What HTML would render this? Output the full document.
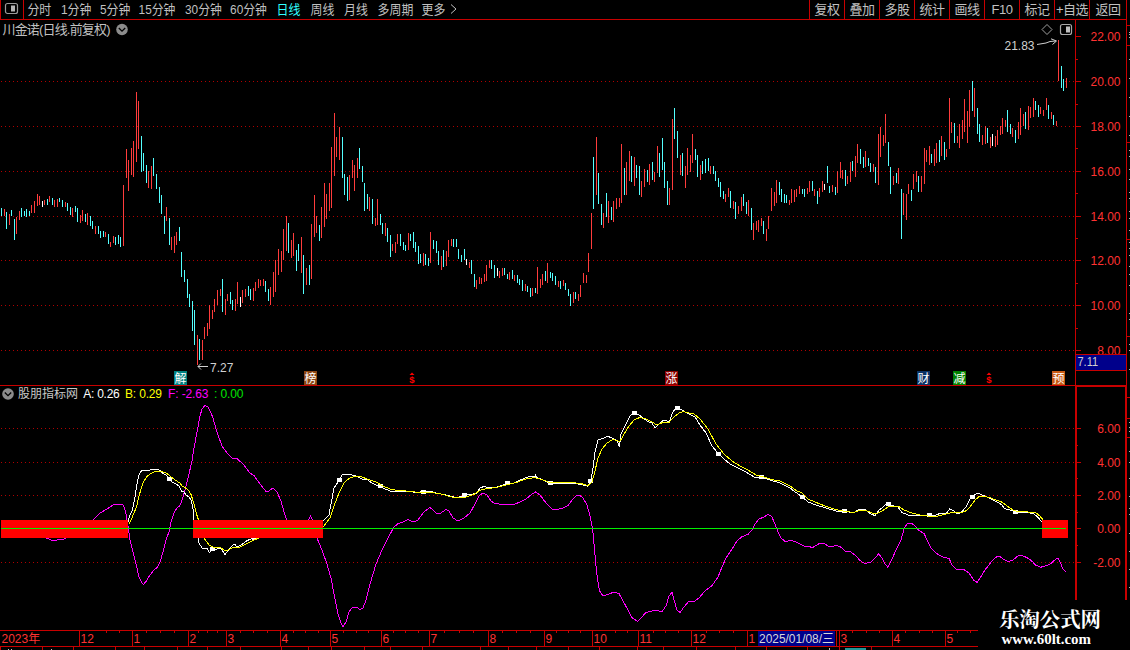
<!DOCTYPE html>
<html lang="zh-CN"><head><meta charset="utf-8"><title>川金诺 日线 股朋指标网</title>
<style>
html,body{margin:0;padding:0;background:#000;}
body{width:1130px;height:650px;overflow:hidden;position:relative;font-family:"Liberation Sans","Noto Sans CJK SC",sans-serif;}
svg{position:absolute;left:0;top:0;display:block;}
text{font-family:"Liberation Sans","Noto Sans CJK SC",sans-serif;}
.tb{font-size:13px;fill:#c0c0c0;letter-spacing:-0.55px;}
.ax{font-size:12px;fill:#ff3232;}
.wm{font-family:"Liberation Serif","Noto Serif CJK SC",serif;font-weight:bold;fill:#fff;}
.mk{font-size:12px;fill:#fff;}
</style></head><body>
<svg width="1130" height="650" viewBox="0 0 1130 650">
<rect x="0" y="0" width="1130" height="650" fill="#000"/>
<line x1="1" y1="81.5" x2="1075" y2="81.5" stroke="#b00000" stroke-width="1" stroke-dasharray="1 3" shape-rendering="crispEdges"/>
<line x1="1" y1="126.5" x2="1075" y2="126.5" stroke="#b00000" stroke-width="1" stroke-dasharray="1 3" shape-rendering="crispEdges"/>
<line x1="1" y1="171.5" x2="1075" y2="171.5" stroke="#b00000" stroke-width="1" stroke-dasharray="1 3" shape-rendering="crispEdges"/>
<line x1="1" y1="216.5" x2="1075" y2="216.5" stroke="#b00000" stroke-width="1" stroke-dasharray="1 3" shape-rendering="crispEdges"/>
<line x1="1" y1="260.5" x2="1075" y2="260.5" stroke="#b00000" stroke-width="1" stroke-dasharray="1 3" shape-rendering="crispEdges"/>
<line x1="1" y1="305.5" x2="1075" y2="305.5" stroke="#b00000" stroke-width="1" stroke-dasharray="1 3" shape-rendering="crispEdges"/>
<line x1="1" y1="350.5" x2="1075" y2="350.5" stroke="#b00000" stroke-width="1" stroke-dasharray="1 3" shape-rendering="crispEdges"/>
<line x1="1" y1="428.5" x2="1075" y2="428.5" stroke="#b00000" stroke-width="1" stroke-dasharray="1 3" shape-rendering="crispEdges"/>
<line x1="1" y1="462.5" x2="1075" y2="462.5" stroke="#b00000" stroke-width="1" stroke-dasharray="1 3" shape-rendering="crispEdges"/>
<line x1="1" y1="495.5" x2="1075" y2="495.5" stroke="#b00000" stroke-width="1" stroke-dasharray="1 3" shape-rendering="crispEdges"/>
<line x1="1" y1="562.5" x2="1075" y2="562.5" stroke="#b00000" stroke-width="1" stroke-dasharray="1 3" shape-rendering="crispEdges"/>
<rect x="1" y="208" width="1" height="8" fill="#54ffff"/>
<rect x="4" y="209" width="1" height="7" fill="#ff3c3c"/>
<rect x="6" y="212" width="1" height="17" fill="#54ffff"/>
<rect x="9" y="214" width="1" height="11" fill="#ff3c3c"/>
<rect x="11" y="210" width="1" height="6" fill="#54ffff"/>
<rect x="14" y="219" width="1" height="21" fill="#54ffff"/>
<rect x="16" y="217" width="1" height="17" fill="#ff3c3c"/>
<rect x="19" y="211" width="1" height="9" fill="#ff3c3c"/>
<rect x="21" y="208" width="1" height="9" fill="#54ffff"/>
<rect x="24" y="211" width="1" height="5" fill="#54ffff"/>
<rect x="26" y="209" width="1" height="8" fill="#54ffff"/>
<rect x="29" y="211" width="1" height="5" fill="#54ffff"/>
<rect x="31" y="205" width="1" height="8" fill="#ff3c3c"/>
<rect x="34" y="201" width="1" height="12" fill="#ff3c3c"/>
<rect x="37" y="194" width="1" height="12" fill="#ff3c3c"/>
<rect x="39" y="196" width="1" height="9" fill="#ff3c3c"/>
<rect x="42" y="201" width="1" height="6" fill="#ffffff"/>
<rect x="44" y="200" width="1" height="5" fill="#ff3c3c"/>
<rect x="47" y="199" width="1" height="6" fill="#54ffff"/>
<rect x="49" y="196" width="1" height="6" fill="#ff3c3c"/>
<rect x="52" y="198" width="1" height="7" fill="#54ffff"/>
<rect x="54" y="200" width="1" height="7" fill="#ff3c3c"/>
<rect x="57" y="199" width="1" height="8" fill="#ff3c3c"/>
<rect x="59" y="198" width="1" height="4" fill="#54ffff"/>
<rect x="62" y="200" width="1" height="7" fill="#54ffff"/>
<rect x="65" y="202" width="1" height="5" fill="#ff3c3c"/>
<rect x="67" y="203" width="1" height="8" fill="#54ffff"/>
<rect x="70" y="207" width="1" height="8" fill="#54ffff"/>
<rect x="72" y="208" width="1" height="9" fill="#ff3c3c"/>
<rect x="75" y="206" width="1" height="6" fill="#54ffff"/>
<rect x="77" y="208" width="1" height="14" fill="#54ffff"/>
<rect x="80" y="215" width="1" height="8" fill="#ff3c3c"/>
<rect x="82" y="210" width="1" height="11" fill="#ff3c3c"/>
<rect x="85" y="214" width="1" height="8" fill="#54ffff"/>
<rect x="87" y="213" width="1" height="12" fill="#ff3c3c"/>
<rect x="90" y="216" width="1" height="10" fill="#54ffff"/>
<rect x="92" y="221" width="1" height="8" fill="#54ffff"/>
<rect x="95" y="226" width="1" height="8" fill="#ff3c3c"/>
<rect x="98" y="226" width="1" height="8" fill="#54ffff"/>
<rect x="100" y="231" width="1" height="7" fill="#54ffff"/>
<rect x="103" y="231" width="1" height="6" fill="#54ffff"/>
<rect x="105" y="232" width="1" height="5" fill="#ff3c3c"/>
<rect x="108" y="234" width="1" height="10" fill="#54ffff"/>
<rect x="110" y="242" width="1" height="5" fill="#ff3c3c"/>
<rect x="113" y="236" width="1" height="7" fill="#ff3c3c"/>
<rect x="115" y="237" width="1" height="8" fill="#54ffff"/>
<rect x="118" y="235" width="1" height="9" fill="#54ffff"/>
<rect x="120" y="237" width="1" height="10" fill="#54ffff"/>
<rect x="123" y="185" width="1" height="61" fill="#ff3c3c"/>
<rect x="126" y="149" width="1" height="29" fill="#ff3c3c"/>
<rect x="128" y="160" width="1" height="31" fill="#ff3c3c"/>
<rect x="131" y="148" width="1" height="27" fill="#ff3c3c"/>
<rect x="133" y="141" width="1" height="36" fill="#ff3c3c"/>
<rect x="136" y="92" width="1" height="70" fill="#ff3c3c"/>
<rect x="138" y="101" width="1" height="48" fill="#ff3c3c"/>
<rect x="141" y="136" width="1" height="36" fill="#54ffff"/>
<rect x="143" y="153" width="1" height="18" fill="#54ffff"/>
<rect x="146" y="165" width="1" height="18" fill="#54ffff"/>
<rect x="148" y="171" width="1" height="17" fill="#ff3c3c"/>
<rect x="151" y="166" width="1" height="23" fill="#ff3c3c"/>
<rect x="153" y="158" width="1" height="18" fill="#54ffff"/>
<rect x="156" y="174" width="1" height="15" fill="#54ffff"/>
<rect x="159" y="187" width="1" height="16" fill="#54ffff"/>
<rect x="161" y="195" width="1" height="19" fill="#54ffff"/>
<rect x="164" y="216" width="1" height="18" fill="#54ffff"/>
<rect x="166" y="207" width="1" height="14" fill="#ff3c3c"/>
<rect x="169" y="218" width="1" height="27" fill="#54ffff"/>
<rect x="171" y="237" width="1" height="13" fill="#ff3c3c"/>
<rect x="174" y="236" width="1" height="17" fill="#ff3c3c"/>
<rect x="176" y="232" width="1" height="13" fill="#ff3c3c"/>
<rect x="179" y="227" width="1" height="14" fill="#54ffff"/>
<rect x="181" y="252" width="1" height="25" fill="#54ffff"/>
<rect x="184" y="270" width="1" height="12" fill="#54ffff"/>
<rect x="187" y="279" width="1" height="19" fill="#54ffff"/>
<rect x="189" y="294" width="1" height="13" fill="#54ffff"/>
<rect x="192" y="301" width="1" height="30" fill="#54ffff"/>
<rect x="194" y="310" width="1" height="35" fill="#54ffff"/>
<rect x="197" y="335" width="1" height="30" fill="#ff3c3c"/>
<rect x="199" y="339" width="1" height="21" fill="#54ffff"/>
<rect x="202" y="340" width="1" height="20" fill="#ff3c3c"/>
<rect x="204" y="327" width="1" height="12" fill="#ff3c3c"/>
<rect x="207" y="323" width="1" height="13" fill="#ff3c3c"/>
<rect x="209" y="305" width="1" height="24" fill="#ff3c3c"/>
<rect x="212" y="310" width="1" height="9" fill="#ff3c3c"/>
<rect x="214" y="299" width="1" height="13" fill="#ff3c3c"/>
<rect x="217" y="290" width="1" height="15" fill="#ff3c3c"/>
<rect x="220" y="289" width="1" height="7" fill="#ff3c3c"/>
<rect x="222" y="279" width="1" height="33" fill="#54ffff"/>
<rect x="225" y="299" width="1" height="16" fill="#ff3c3c"/>
<rect x="227" y="294" width="1" height="7" fill="#ff3c3c"/>
<rect x="230" y="292" width="1" height="12" fill="#54ffff"/>
<rect x="232" y="300" width="1" height="10" fill="#54ffff"/>
<rect x="235" y="299" width="1" height="12" fill="#ff3c3c"/>
<rect x="237" y="282" width="1" height="22" fill="#ff3c3c"/>
<rect x="240" y="297" width="1" height="10" fill="#ffffff"/>
<rect x="242" y="290" width="1" height="13" fill="#ff3c3c"/>
<rect x="245" y="289" width="1" height="8" fill="#ff3c3c"/>
<rect x="248" y="286" width="1" height="10" fill="#54ffff"/>
<rect x="250" y="289" width="1" height="11" fill="#54ffff"/>
<rect x="253" y="288" width="1" height="13" fill="#ff3c3c"/>
<rect x="255" y="282" width="1" height="9" fill="#ff3c3c"/>
<rect x="258" y="279" width="1" height="9" fill="#ff3c3c"/>
<rect x="260" y="280" width="1" height="6" fill="#ff3c3c"/>
<rect x="263" y="279" width="1" height="7" fill="#ff3c3c"/>
<rect x="265" y="281" width="1" height="11" fill="#54ffff"/>
<rect x="268" y="289" width="1" height="12" fill="#54ffff"/>
<rect x="270" y="287" width="1" height="18" fill="#ff3c3c"/>
<rect x="273" y="272" width="1" height="25" fill="#ff3c3c"/>
<rect x="275" y="260" width="1" height="32" fill="#ff3c3c"/>
<rect x="278" y="249" width="1" height="26" fill="#ff3c3c"/>
<rect x="281" y="251" width="1" height="21" fill="#ff3c3c"/>
<rect x="283" y="229" width="1" height="31" fill="#ff3c3c"/>
<rect x="286" y="216" width="1" height="35" fill="#ff3c3c"/>
<rect x="288" y="223" width="1" height="30" fill="#54ffff"/>
<rect x="291" y="240" width="1" height="18" fill="#ff3c3c"/>
<rect x="293" y="233" width="1" height="23" fill="#ff3c3c"/>
<rect x="296" y="250" width="1" height="21" fill="#54ffff"/>
<rect x="298" y="244" width="1" height="17" fill="#54ffff"/>
<rect x="301" y="237" width="1" height="36" fill="#ff3c3c"/>
<rect x="303" y="255" width="1" height="39" fill="#54ffff"/>
<rect x="306" y="268" width="1" height="17" fill="#ff3c3c"/>
<rect x="309" y="265" width="1" height="20" fill="#54ffff"/>
<rect x="311" y="224" width="1" height="55" fill="#ff3c3c"/>
<rect x="314" y="195" width="1" height="42" fill="#ff3c3c"/>
<rect x="316" y="216" width="1" height="17" fill="#ff3c3c"/>
<rect x="319" y="225" width="1" height="16" fill="#54ffff"/>
<rect x="321" y="207" width="1" height="31" fill="#ff3c3c"/>
<rect x="324" y="183" width="1" height="44" fill="#ff3c3c"/>
<rect x="326" y="194" width="1" height="25" fill="#ff3c3c"/>
<rect x="329" y="183" width="1" height="28" fill="#ff3c3c"/>
<rect x="331" y="147" width="1" height="61" fill="#ff3c3c"/>
<rect x="334" y="113" width="1" height="63" fill="#ff3c3c"/>
<rect x="336" y="137" width="1" height="20" fill="#ff3c3c"/>
<rect x="339" y="127" width="1" height="33" fill="#ff3c3c"/>
<rect x="342" y="137" width="1" height="41" fill="#54ffff"/>
<rect x="344" y="174" width="1" height="21" fill="#54ffff"/>
<rect x="347" y="177" width="1" height="24" fill="#54ffff"/>
<rect x="349" y="175" width="1" height="25" fill="#ff3c3c"/>
<rect x="352" y="160" width="1" height="18" fill="#ff3c3c"/>
<rect x="354" y="165" width="1" height="26" fill="#ff3c3c"/>
<rect x="357" y="158" width="1" height="20" fill="#ff3c3c"/>
<rect x="359" y="148" width="1" height="21" fill="#54ffff"/>
<rect x="362" y="166" width="1" height="16" fill="#54ffff"/>
<rect x="364" y="183" width="1" height="28" fill="#54ffff"/>
<rect x="367" y="194" width="1" height="15" fill="#54ffff"/>
<rect x="369" y="197" width="1" height="14" fill="#ff3c3c"/>
<rect x="372" y="199" width="1" height="25" fill="#54ffff"/>
<rect x="375" y="218" width="1" height="8" fill="#ff3c3c"/>
<rect x="377" y="199" width="1" height="26" fill="#ff3c3c"/>
<rect x="380" y="214" width="1" height="11" fill="#54ffff"/>
<rect x="382" y="223" width="1" height="11" fill="#54ffff"/>
<rect x="385" y="223" width="1" height="13" fill="#ff3c3c"/>
<rect x="387" y="228" width="1" height="14" fill="#54ffff"/>
<rect x="390" y="235" width="1" height="22" fill="#54ffff"/>
<rect x="392" y="244" width="1" height="7" fill="#ff3c3c"/>
<rect x="395" y="242" width="1" height="11" fill="#ff3c3c"/>
<rect x="397" y="234" width="1" height="10" fill="#ff3c3c"/>
<rect x="400" y="234" width="1" height="12" fill="#54ffff"/>
<rect x="403" y="242" width="1" height="8" fill="#54ffff"/>
<rect x="405" y="245" width="1" height="6" fill="#54ffff"/>
<rect x="408" y="233" width="1" height="17" fill="#ff3c3c"/>
<rect x="410" y="234" width="1" height="7" fill="#54ffff"/>
<rect x="413" y="232" width="1" height="16" fill="#54ffff"/>
<rect x="415" y="242" width="1" height="10" fill="#54ffff"/>
<rect x="418" y="246" width="1" height="18" fill="#54ffff"/>
<rect x="420" y="254" width="1" height="9" fill="#54ffff"/>
<rect x="423" y="253" width="1" height="13" fill="#ff3c3c"/>
<rect x="425" y="254" width="1" height="11" fill="#54ffff"/>
<rect x="428" y="258" width="1" height="8" fill="#54ffff"/>
<rect x="430" y="232" width="1" height="31" fill="#ff3c3c"/>
<rect x="433" y="240" width="1" height="9" fill="#54ffff"/>
<rect x="436" y="241" width="1" height="12" fill="#54ffff"/>
<rect x="438" y="251" width="1" height="14" fill="#54ffff"/>
<rect x="441" y="256" width="1" height="14" fill="#ff3c3c"/>
<rect x="443" y="250" width="1" height="17" fill="#54ffff"/>
<rect x="446" y="251" width="1" height="15" fill="#ff3c3c"/>
<rect x="448" y="240" width="1" height="17" fill="#ff3c3c"/>
<rect x="451" y="239" width="1" height="7" fill="#ff3c3c"/>
<rect x="453" y="239" width="1" height="8" fill="#54ffff"/>
<rect x="456" y="239" width="1" height="8" fill="#54ffff"/>
<rect x="458" y="249" width="1" height="10" fill="#54ffff"/>
<rect x="461" y="255" width="1" height="7" fill="#54ffff"/>
<rect x="464" y="249" width="1" height="11" fill="#54ffff"/>
<rect x="466" y="259" width="1" height="6" fill="#ffffff"/>
<rect x="469" y="262" width="1" height="6" fill="#ff3c3c"/>
<rect x="471" y="260" width="1" height="14" fill="#54ffff"/>
<rect x="474" y="274" width="1" height="13" fill="#54ffff"/>
<rect x="476" y="280" width="1" height="9" fill="#ff3c3c"/>
<rect x="479" y="277" width="1" height="7" fill="#ff3c3c"/>
<rect x="481" y="278" width="1" height="6" fill="#ff3c3c"/>
<rect x="484" y="274" width="1" height="8" fill="#ff3c3c"/>
<rect x="486" y="265" width="1" height="16" fill="#ff3c3c"/>
<rect x="489" y="260" width="1" height="8" fill="#ff3c3c"/>
<rect x="491" y="260" width="1" height="9" fill="#54ffff"/>
<rect x="494" y="265" width="1" height="13" fill="#54ffff"/>
<rect x="497" y="268" width="1" height="8" fill="#ffffff"/>
<rect x="499" y="271" width="1" height="7" fill="#ff3c3c"/>
<rect x="502" y="268" width="1" height="8" fill="#ff3c3c"/>
<rect x="504" y="268" width="1" height="7" fill="#54ffff"/>
<rect x="507" y="274" width="1" height="5" fill="#54ffff"/>
<rect x="509" y="272" width="1" height="8" fill="#ff3c3c"/>
<rect x="512" y="270" width="1" height="9" fill="#54ffff"/>
<rect x="514" y="275" width="1" height="6" fill="#ff3c3c"/>
<rect x="517" y="275" width="1" height="8" fill="#54ffff"/>
<rect x="519" y="279" width="1" height="6" fill="#54ffff"/>
<rect x="522" y="280" width="1" height="11" fill="#54ffff"/>
<rect x="525" y="284" width="1" height="7" fill="#ff3c3c"/>
<rect x="527" y="286" width="1" height="6" fill="#54ffff"/>
<rect x="530" y="288" width="1" height="9" fill="#54ffff"/>
<rect x="532" y="288" width="1" height="8" fill="#ff3c3c"/>
<rect x="535" y="288" width="1" height="5" fill="#54ffff"/>
<rect x="537" y="267" width="1" height="27" fill="#ff3c3c"/>
<rect x="540" y="279" width="1" height="9" fill="#ff3c3c"/>
<rect x="542" y="274" width="1" height="11" fill="#ff3c3c"/>
<rect x="545" y="271" width="1" height="10" fill="#54ffff"/>
<rect x="547" y="263" width="1" height="20" fill="#ff3c3c"/>
<rect x="550" y="272" width="1" height="6" fill="#54ffff"/>
<rect x="552" y="273" width="1" height="8" fill="#54ffff"/>
<rect x="555" y="276" width="1" height="9" fill="#54ffff"/>
<rect x="558" y="281" width="1" height="6" fill="#ff3c3c"/>
<rect x="560" y="281" width="1" height="8" fill="#54ffff"/>
<rect x="563" y="280" width="1" height="6" fill="#ff3c3c"/>
<rect x="565" y="283" width="1" height="7" fill="#54ffff"/>
<rect x="568" y="289" width="1" height="7" fill="#54ffff"/>
<rect x="570" y="294" width="1" height="12" fill="#54ffff"/>
<rect x="573" y="292" width="1" height="11" fill="#ff3c3c"/>
<rect x="575" y="292" width="1" height="7" fill="#54ffff"/>
<rect x="578" y="294" width="1" height="7" fill="#ff3c3c"/>
<rect x="580" y="285" width="1" height="12" fill="#ff3c3c"/>
<rect x="583" y="273" width="1" height="10" fill="#ff3c3c"/>
<rect x="586" y="275" width="1" height="8" fill="#ff3c3c"/>
<rect x="588" y="253" width="1" height="19" fill="#ff3c3c"/>
<rect x="591" y="213" width="1" height="36" fill="#ff3c3c"/>
<rect x="593" y="157" width="1" height="52" fill="#54ffff"/>
<rect x="596" y="137" width="1" height="58" fill="#ff3c3c"/>
<rect x="598" y="173" width="1" height="31" fill="#54ffff"/>
<rect x="601" y="204" width="1" height="21" fill="#54ffff"/>
<rect x="603" y="213" width="1" height="15" fill="#ff3c3c"/>
<rect x="606" y="193" width="1" height="24" fill="#54ffff"/>
<rect x="608" y="201" width="1" height="22" fill="#ff3c3c"/>
<rect x="611" y="207" width="1" height="13" fill="#54ffff"/>
<rect x="613" y="201" width="1" height="21" fill="#ff3c3c"/>
<rect x="616" y="198" width="1" height="11" fill="#ff3c3c"/>
<rect x="619" y="198" width="1" height="9" fill="#ff3c3c"/>
<rect x="621" y="144" width="1" height="59" fill="#ff3c3c"/>
<rect x="624" y="168" width="1" height="27" fill="#54ffff"/>
<rect x="626" y="162" width="1" height="33" fill="#ff3c3c"/>
<rect x="629" y="151" width="1" height="30" fill="#ff3c3c"/>
<rect x="631" y="156" width="1" height="26" fill="#54ffff"/>
<rect x="634" y="157" width="1" height="29" fill="#ff3c3c"/>
<rect x="636" y="165" width="1" height="13" fill="#54ffff"/>
<rect x="639" y="166" width="1" height="29" fill="#54ffff"/>
<rect x="641" y="181" width="1" height="16" fill="#ff3c3c"/>
<rect x="644" y="169" width="1" height="18" fill="#ff3c3c"/>
<rect x="647" y="170" width="1" height="12" fill="#54ffff"/>
<rect x="649" y="164" width="1" height="21" fill="#ff3c3c"/>
<rect x="652" y="162" width="1" height="18" fill="#54ffff"/>
<rect x="654" y="172" width="1" height="10" fill="#ff3c3c"/>
<rect x="657" y="146" width="1" height="27" fill="#ff3c3c"/>
<rect x="659" y="153" width="1" height="24" fill="#54ffff"/>
<rect x="662" y="138" width="1" height="32" fill="#54ffff"/>
<rect x="664" y="162" width="1" height="26" fill="#54ffff"/>
<rect x="667" y="181" width="1" height="24" fill="#54ffff"/>
<rect x="669" y="188" width="1" height="17" fill="#ff3c3c"/>
<rect x="672" y="119" width="1" height="71" fill="#ff3c3c"/>
<rect x="674" y="108" width="1" height="31" fill="#54ffff"/>
<rect x="677" y="131" width="1" height="27" fill="#54ffff"/>
<rect x="680" y="155" width="1" height="20" fill="#ff3c3c"/>
<rect x="682" y="153" width="1" height="23" fill="#54ffff"/>
<rect x="685" y="166" width="1" height="22" fill="#ff3c3c"/>
<rect x="687" y="148" width="1" height="27" fill="#ff3c3c"/>
<rect x="690" y="155" width="1" height="17" fill="#ff3c3c"/>
<rect x="692" y="134" width="1" height="29" fill="#ff3c3c"/>
<rect x="695" y="149" width="1" height="11" fill="#54ffff"/>
<rect x="697" y="155" width="1" height="22" fill="#54ffff"/>
<rect x="700" y="165" width="1" height="15" fill="#ff3c3c"/>
<rect x="702" y="161" width="1" height="13" fill="#54ffff"/>
<rect x="705" y="159" width="1" height="14" fill="#54ffff"/>
<rect x="708" y="158" width="1" height="13" fill="#54ffff"/>
<rect x="710" y="166" width="1" height="8" fill="#ff3c3c"/>
<rect x="713" y="166" width="1" height="8" fill="#54ffff"/>
<rect x="715" y="171" width="1" height="10" fill="#54ffff"/>
<rect x="718" y="178" width="1" height="9" fill="#54ffff"/>
<rect x="720" y="182" width="1" height="15" fill="#54ffff"/>
<rect x="723" y="191" width="1" height="8" fill="#54ffff"/>
<rect x="725" y="194" width="1" height="8" fill="#ff3c3c"/>
<rect x="728" y="188" width="1" height="9" fill="#ff3c3c"/>
<rect x="730" y="191" width="1" height="17" fill="#54ffff"/>
<rect x="733" y="201" width="1" height="8" fill="#ff3c3c"/>
<rect x="735" y="202" width="1" height="17" fill="#54ffff"/>
<rect x="738" y="206" width="1" height="8" fill="#ff3c3c"/>
<rect x="741" y="197" width="1" height="14" fill="#ff3c3c"/>
<rect x="743" y="194" width="1" height="12" fill="#54ffff"/>
<rect x="746" y="202" width="1" height="12" fill="#54ffff"/>
<rect x="748" y="200" width="1" height="16" fill="#ff3c3c"/>
<rect x="751" y="208" width="1" height="22" fill="#54ffff"/>
<rect x="753" y="223" width="1" height="17" fill="#ff3c3c"/>
<rect x="756" y="221" width="1" height="9" fill="#ff3c3c"/>
<rect x="758" y="220" width="1" height="12" fill="#ff3c3c"/>
<rect x="761" y="218" width="1" height="8" fill="#ff3c3c"/>
<rect x="763" y="221" width="1" height="13" fill="#54ffff"/>
<rect x="766" y="229" width="1" height="12" fill="#ff3c3c"/>
<rect x="768" y="216" width="1" height="13" fill="#ff3c3c"/>
<rect x="771" y="188" width="1" height="23" fill="#ff3c3c"/>
<rect x="774" y="192" width="1" height="14" fill="#ff3c3c"/>
<rect x="776" y="180" width="1" height="23" fill="#ff3c3c"/>
<rect x="779" y="182" width="1" height="13" fill="#54ffff"/>
<rect x="781" y="189" width="1" height="13" fill="#54ffff"/>
<rect x="784" y="194" width="1" height="9" fill="#54ffff"/>
<rect x="786" y="195" width="1" height="8" fill="#54ffff"/>
<rect x="789" y="200" width="1" height="5" fill="#ff3c3c"/>
<rect x="791" y="189" width="1" height="14" fill="#ff3c3c"/>
<rect x="794" y="190" width="1" height="12" fill="#ff3c3c"/>
<rect x="796" y="189" width="1" height="8" fill="#ff3c3c"/>
<rect x="799" y="186" width="1" height="8" fill="#ff3c3c"/>
<rect x="802" y="189" width="1" height="5" fill="#54ffff"/>
<rect x="804" y="189" width="1" height="8" fill="#54ffff"/>
<rect x="807" y="188" width="1" height="6" fill="#ff3c3c"/>
<rect x="809" y="181" width="1" height="11" fill="#ff3c3c"/>
<rect x="812" y="181" width="1" height="10" fill="#54ffff"/>
<rect x="814" y="189" width="1" height="7" fill="#ff3c3c"/>
<rect x="817" y="191" width="1" height="13" fill="#54ffff"/>
<rect x="819" y="188" width="1" height="9" fill="#ff3c3c"/>
<rect x="822" y="181" width="1" height="11" fill="#ff3c3c"/>
<rect x="824" y="184" width="1" height="6" fill="#ffffff"/>
<rect x="827" y="166" width="1" height="17" fill="#54ffff"/>
<rect x="829" y="186" width="1" height="7" fill="#54ffff"/>
<rect x="832" y="185" width="1" height="7" fill="#ff3c3c"/>
<rect x="835" y="187" width="1" height="8" fill="#54ffff"/>
<rect x="837" y="171" width="1" height="22" fill="#ff3c3c"/>
<rect x="840" y="162" width="1" height="16" fill="#ff3c3c"/>
<rect x="842" y="170" width="1" height="9" fill="#ff3c3c"/>
<rect x="845" y="170" width="1" height="16" fill="#54ffff"/>
<rect x="847" y="176" width="1" height="8" fill="#ff3c3c"/>
<rect x="850" y="162" width="1" height="20" fill="#ff3c3c"/>
<rect x="852" y="161" width="1" height="10" fill="#54ffff"/>
<rect x="855" y="156" width="1" height="21" fill="#ff3c3c"/>
<rect x="857" y="144" width="1" height="19" fill="#ff3c3c"/>
<rect x="860" y="149" width="1" height="15" fill="#54ffff"/>
<rect x="863" y="157" width="1" height="11" fill="#54ffff"/>
<rect x="865" y="151" width="1" height="16" fill="#ff3c3c"/>
<rect x="868" y="158" width="1" height="8" fill="#54ffff"/>
<rect x="870" y="163" width="1" height="9" fill="#54ffff"/>
<rect x="873" y="164" width="1" height="8" fill="#ff3c3c"/>
<rect x="875" y="167" width="1" height="16" fill="#54ffff"/>
<rect x="878" y="134" width="1" height="51" fill="#ff3c3c"/>
<rect x="880" y="127" width="1" height="30" fill="#ff3c3c"/>
<rect x="883" y="135" width="1" height="11" fill="#ff3c3c"/>
<rect x="885" y="114" width="1" height="29" fill="#ff3c3c"/>
<rect x="888" y="142" width="1" height="24" fill="#54ffff"/>
<rect x="890" y="167" width="1" height="27" fill="#54ffff"/>
<rect x="893" y="176" width="1" height="9" fill="#ff3c3c"/>
<rect x="896" y="173" width="1" height="10" fill="#54ffff"/>
<rect x="898" y="168" width="1" height="16" fill="#ff3c3c"/>
<rect x="901" y="189" width="1" height="50" fill="#54ffff"/>
<rect x="903" y="193" width="1" height="22" fill="#ff3c3c"/>
<rect x="906" y="194" width="1" height="26" fill="#ff3c3c"/>
<rect x="908" y="184" width="1" height="10" fill="#ff3c3c"/>
<rect x="911" y="190" width="1" height="11" fill="#54ffff"/>
<rect x="913" y="174" width="1" height="15" fill="#ff3c3c"/>
<rect x="916" y="171" width="1" height="11" fill="#ff3c3c"/>
<rect x="918" y="176" width="1" height="16" fill="#54ffff"/>
<rect x="921" y="176" width="1" height="16" fill="#ff3c3c"/>
<rect x="924" y="148" width="1" height="36" fill="#ff3c3c"/>
<rect x="926" y="150" width="1" height="12" fill="#ff3c3c"/>
<rect x="929" y="146" width="1" height="19" fill="#ff3c3c"/>
<rect x="931" y="154" width="1" height="9" fill="#54ffff"/>
<rect x="934" y="149" width="1" height="17" fill="#ff3c3c"/>
<rect x="936" y="143" width="1" height="20" fill="#ff3c3c"/>
<rect x="939" y="140" width="1" height="22" fill="#54ffff"/>
<rect x="941" y="136" width="1" height="20" fill="#ff3c3c"/>
<rect x="944" y="142" width="1" height="18" fill="#54ffff"/>
<rect x="946" y="149" width="1" height="8" fill="#ff3c3c"/>
<rect x="949" y="98" width="1" height="51" fill="#ff3c3c"/>
<rect x="951" y="122" width="1" height="11" fill="#ff3c3c"/>
<rect x="954" y="123" width="1" height="20" fill="#54ffff"/>
<rect x="957" y="136" width="1" height="7" fill="#ff3c3c"/>
<rect x="959" y="124" width="1" height="24" fill="#ff3c3c"/>
<rect x="962" y="120" width="1" height="19" fill="#ff3c3c"/>
<rect x="964" y="99" width="1" height="33" fill="#ff3c3c"/>
<rect x="967" y="111" width="1" height="32" fill="#ff3c3c"/>
<rect x="969" y="90" width="1" height="37" fill="#ff3c3c"/>
<rect x="972" y="81" width="1" height="30" fill="#54ffff"/>
<rect x="974" y="88" width="1" height="29" fill="#ff3c3c"/>
<rect x="977" y="108" width="1" height="26" fill="#54ffff"/>
<rect x="979" y="124" width="1" height="18" fill="#54ffff"/>
<rect x="982" y="135" width="1" height="10" fill="#ff3c3c"/>
<rect x="985" y="126" width="1" height="18" fill="#ff3c3c"/>
<rect x="987" y="128" width="1" height="15" fill="#54ffff"/>
<rect x="990" y="137" width="1" height="11" fill="#ff3c3c"/>
<rect x="992" y="134" width="1" height="12" fill="#ffffff"/>
<rect x="995" y="136" width="1" height="11" fill="#ff3c3c"/>
<rect x="997" y="130" width="1" height="15" fill="#ff3c3c"/>
<rect x="1000" y="126" width="1" height="9" fill="#ff3c3c"/>
<rect x="1002" y="118" width="1" height="16" fill="#ff3c3c"/>
<rect x="1005" y="120" width="1" height="7" fill="#ff3c3c"/>
<rect x="1007" y="110" width="1" height="22" fill="#54ffff"/>
<rect x="1010" y="124" width="1" height="10" fill="#54ffff"/>
<rect x="1012" y="128" width="1" height="9" fill="#ff3c3c"/>
<rect x="1015" y="130" width="1" height="13" fill="#54ffff"/>
<rect x="1018" y="122" width="1" height="17" fill="#ff3c3c"/>
<rect x="1020" y="108" width="1" height="27" fill="#ff3c3c"/>
<rect x="1023" y="114" width="1" height="12" fill="#ff3c3c"/>
<rect x="1025" y="112" width="1" height="17" fill="#54ffff"/>
<rect x="1028" y="106" width="1" height="24" fill="#ff3c3c"/>
<rect x="1030" y="107" width="1" height="11" fill="#ff3c3c"/>
<rect x="1033" y="98" width="1" height="19" fill="#ff3c3c"/>
<rect x="1035" y="101" width="1" height="9" fill="#54ffff"/>
<rect x="1038" y="105" width="1" height="12" fill="#54ffff"/>
<rect x="1040" y="107" width="1" height="7" fill="#ff3c3c"/>
<rect x="1043" y="110" width="1" height="6" fill="#ff3c3c"/>
<rect x="1046" y="98" width="1" height="12" fill="#ff3c3c"/>
<rect x="1048" y="105" width="1" height="14" fill="#54ffff"/>
<rect x="1051" y="112" width="1" height="7" fill="#ff3c3c"/>
<rect x="1053" y="115" width="1" height="10" fill="#54ffff"/>
<rect x="1056" y="121" width="1" height="5" fill="#ff3c3c"/>
<rect x="1058" y="40" width="1" height="41" fill="#ff3c3c"/>
<rect x="1061" y="66" width="1" height="22" fill="#54ffff"/>
<rect x="1063" y="79" width="1" height="12" fill="#54ffff"/>
<rect x="1066" y="78" width="1" height="10" fill="#ff3c3c"/>
<polyline points="2,534 30,535 46,538 53,540.6 64,539 66,538 75,532 85,525 93,520 100,513 107,509 114,504.4 120,504.3 123,505 124.5,508 126,514 127,520 128,526 130,540 133,552 136,564 139,577 141.6,582.4 143.4,584.4 146,581.6 150,575 154,570 157,567.6 160,562 163,552 166,540 169.6,530 170.5,524 172,519 174.5,512 177,508 179,506.5 181,503 183,497 185,490 187,482 189,474 191,465 192.2,460 193,454 197,432 200,416 202,409 205,405.4 208,407 211,413 213,418 217,432 222,446 227,453 232,458 237,458.6 243,464 250,473 254,475.6 260,484 266,491.4 269,491 273,488 277,492 281,501 284,512 286.6,520 290,526 300,528 306,524 308.4,520 310.6,516 312.6,520 317,538 322,550 327,564 331,578 334,594 338,614 341,623 343,626.4 346,622 349,612 352,608 357,607.4 360,609.6 363,608 366,600 370,584 376,564 382,550 388,538 394,527 398,523.6 403,522 408,519.4 412,521.4 414,522 418,520 424,512 430,507.4 436,513 440,513.6 446,509.4 449,511 453,518 458,521 464,518 470,513 475,504 479,496 483,493 487,495 491,501 495,503.6 504,504.6 514,504.4 520,502 526,499 532,494 535.6,492 540,495 546,503 552,509 558,509.4 563,508 568,505.6 572,500 576,496 579.6,495.4 583,498 587,505 590,516 592.6,529 594,544 595.6,562 597.6,580 599.6,591 603,596 608,594.4 614,592 619,593.6 623,601 628,610 632,617.6 637.6,621.4 641,618 646,612.4 654,610.4 662,611.4 666,606 669,596 672,592.4 674,600 677,610 680,612.4 684,607 689,601 695,601 699,598 705,591 712,585.6 718,577 722,567 726,558 732,549 737,541 742,536.6 748,534.4 752,530 755,524 759,519 764,517 768,514.4 771.6,516.4 775,524 778,532 781,538 785,541.4 792,540.6 796,542 804,546 813,547.4 820,543 824,543.6 830,547 836,545.4 840,546.4 845,551 851,552 856,556 860,560.6 865,563.6 871,562 875,558 878.6,554 882,558 885,564 888,567.4 892,559 896,550 901,540 904,529 907,524 912,523.4 916,527 919,530.6 924,533.4 927,540 931,548 938,554.6 944,557.4 949,558.4 952,565 956,569 964,569.6 969,573 974,580.4 977,582.4 980,578 985,570 990,563.5 993,560 997,556.5 1000,556.5 1003.8,559.7 1008.5,561.5 1013,560 1017.7,556 1020.8,555.4 1024.6,556.6 1028.5,558.5 1032.3,561.5 1036,565.4 1040.8,567.2 1045.4,566 1050,564.3 1053.8,560.8 1057,558 1058.5,558.8 1060.8,563.8 1063,569 1065.7,571.8" fill="none" stroke="#ff00ff" stroke-width="1" stroke-linejoin="round" shape-rendering="crispEdges"/>
<polyline points="128,522 128.5,519 130,515 132.5,510 134.5,500 136,490 137.5,481 139,475 141,471.5 142.5,470.3 150,470 150.5,469.3 158,469.3 160,470.5 163,473.5 166,475 168,477 172,482 176,484 179,486 181.5,491 184,492 186,495 189,497 191,500 192.5,506 193.5,512 194,520 195,530 198,538 199,543 202,548 207,548.6 209.6,553 212,549 217,549 221,548.4 225,554.4 229,549.6 233,545 235,544.4 237,547 242,544.4 247,540.6 252,538.6 254,538 262,534 280,530 300,528 318,526 323,521 329,515 331,504 334,488 338,482 342.4,474.6 350,474.6 356,476 362,479 367,479.4 372,483 379,486.4 390,491 400,491 408,491 416,492.6 423.6,491.6 429,491 436,493 446,495 453,496.6 456.4,498 464,495.4 470,494.6 476,493.6 480,488 484,486.4 489,488 496,487.6 503,485 507.4,483 514,483 520,480 528,477 535,476.6 535.6,475 537,477.5 542,479.6 548,482.6 550.4,483 560,483 570,483 580,484.2 588,486.2 591,481.2 593,468 595,452 598,440 602,438.6 608,436.4 613,438.4 617,441 619.4,446.4 621,434 626,424 630,416 634,413 639,415 642,417 648,421.6 652,423 655,428 659,424 663,420.6 667,421 669.4,422 672,414 675,409 677.4,407.6 682,410 687,413 691,415 695,417 700,425 706,433 712,446 718.4,453.6 724,459 730,464 738,468 746,472 754,477 761.4,477 768,479.4 780,483 790,488 796,492.5 802.4,497 808,502 816,505 826,508 836,511 845,511 853,513 860,509 865,509.6 871,514 875,515.6 879,510 882,508 885,505 888,504 894,506 898,507 902,512.4 908,515 920,516 929.6,515 936,515 941,513 946,514 949.6,509 954,511 957.6,514 962,511.6 966,507 970,499 972.4,496.6 977,493 981,494.4 986,496.6 990,498.5 996,501.5 1001.5,504.6 1004.6,508.5 1010,510 1015.4,512 1022.3,512 1028.5,512.6 1033.8,513.8 1037.7,517 1040.8,520.8 1042,522.3" fill="none" stroke="#ffffff" stroke-width="1" stroke-linejoin="round" shape-rendering="crispEdges"/>
<rect x="167" y="477" width="5" height="4" fill="#fff"/>
<rect x="210" y="547" width="5" height="4" fill="#fff"/>
<rect x="252" y="536" width="5" height="4" fill="#fff"/>
<rect x="337" y="478" width="5" height="4" fill="#fff"/>
<rect x="378" y="484" width="5" height="4" fill="#fff"/>
<rect x="421" y="490" width="5" height="4" fill="#fff"/>
<rect x="462" y="493" width="5" height="4" fill="#fff"/>
<rect x="505" y="481" width="5" height="4" fill="#fff"/>
<rect x="548" y="481" width="5" height="4" fill="#fff"/>
<rect x="588" y="479" width="5" height="4" fill="#fff"/>
<rect x="632" y="411" width="5" height="4" fill="#fff"/>
<rect x="675" y="406" width="5" height="4" fill="#fff"/>
<rect x="716" y="452" width="5" height="4" fill="#fff"/>
<rect x="759" y="475" width="5" height="4" fill="#fff"/>
<rect x="800" y="495" width="5" height="4" fill="#fff"/>
<rect x="842" y="509" width="5" height="4" fill="#fff"/>
<rect x="886" y="502" width="5" height="4" fill="#fff"/>
<rect x="927" y="513" width="5" height="4" fill="#fff"/>
<rect x="970" y="495" width="5" height="4" fill="#fff"/>
<rect x="1013" y="510" width="5" height="4" fill="#fff"/>
<polyline points="129,524 131,520 134,513 136.5,507 138.5,498 141,489 143.5,482 147,476.5 150,474 154,472 158,471.2 162,471.8 165,472.5 169,475 173,478.5 177,481.2 180,483 182,485.8 185,487.5 189,491 191,494.5 192.5,499 194.5,506 196.5,514 198.5,520 201,530 204,538 209,545 215,548 220,547.6 226,551 232,548 240,547 248,543 254,540 259,538 270,533 290,530 310,528 323,527 330,518 334,506 339,493 344,483 349,478.4 355,476.4 361,476.6 368,479.4 376,482 383,486 390,489 398,490.6 406,491 410,491.6 420,492.4 430,492.4 440,493.6 450,496.6 456,498 466,497 474,494.4 480,490.4 486,488.6 496,487.6 506,485 516,482.6 526,479 535,477.6 542,479.6 550,482.6 560,482.6 570,482.6 580,483.3 588,485.6 592,482 595,471 598,458 602,449 607,443 613,439.4 617,440.6 619.6,442 623,436 629,426 634,420 640,417.4 646,419 652,422 657,425 663,422.4 669,422.4 674,417 679,413 683,411.6 689,413 694,414 700,419 708,429 716,444 724,454 732,461 740,466 748,470 756,475 764,477 772,479.6 780,481 790,486 796,490.4 802,493 808,499 816,502.4 826,506.4 836,509.6 846,511.6 854,512.4 860,510.4 866,510.4 872,513 876,514 882,511 888,507 894,506 899,506.6 904,510 912,513 920,515 928,516 936,516.4 944,514.4 952,512.4 958,513 965,511.6 970,507 975,500 979,496.6 985,496.4 990,497.7 996,500 1002.3,502.3 1007,506 1013,510 1019,511.8 1025.4,511.8 1031.5,512.3 1036,513 1040,516 1043,520" fill="none" stroke="#ffff00" stroke-width="1" stroke-linejoin="round" shape-rendering="crispEdges"/>
<rect x="1" y="520" width="127" height="18" fill="#ff0000"/>
<rect x="193" y="520" width="130" height="18" fill="#ff0000"/>
<rect x="1042" y="520" width="26" height="18" fill="#ff0000"/>
<rect x="1" y="528" width="1065" height="1" fill="#00f000"/>
<rect x="0" y="19" width="1127" height="1" fill="#c80000"/>
<rect x="0" y="0" width="1" height="20" fill="#c80000"/>
<rect x="23" y="0" width="1" height="20" fill="#c80000"/>
<rect x="809" y="0" width="1" height="20" fill="#c80000"/>
<rect x="844" y="0" width="1" height="20" fill="#c80000"/>
<rect x="879" y="0" width="1" height="20" fill="#c80000"/>
<rect x="914" y="0" width="1" height="20" fill="#c80000"/>
<rect x="949" y="0" width="1" height="20" fill="#c80000"/>
<rect x="984" y="0" width="1" height="20" fill="#c80000"/>
<rect x="1019" y="0" width="1" height="20" fill="#c80000"/>
<rect x="1054" y="0" width="1" height="20" fill="#c80000"/>
<rect x="1089" y="0" width="1" height="20" fill="#c80000"/>
<rect x="1075" y="20" width="1" height="366" fill="#c80000"/>
<rect x="1126" y="0" width="1" height="386" fill="#c80000"/>
<rect x="1075" y="386" width="2" height="214" fill="#c80000"/>
<rect x="1125" y="386" width="2" height="214" fill="#c80000"/>
<rect x="0" y="385" width="1127" height="1" fill="#c80000"/>
<rect x="1075" y="386" width="52" height="1" fill="#c80000"/>
<rect x="1127" y="397" width="3" height="1" fill="#c80000"/>
<rect x="0" y="630" width="978" height="1" fill="#c80000"/>
<rect x="0" y="646" width="978" height="1" fill="#c80000"/>
<rect x="1127" y="25" width="3" height="1" fill="#c80000"/>
<rect x="1127" y="45" width="3" height="1" fill="#c80000"/>
<rect x="1127" y="142" width="3" height="1" fill="#c80000"/>
<rect x="1127" y="239" width="3" height="1" fill="#c80000"/>
<rect x="1127" y="336" width="3" height="1" fill="#c80000"/>
<rect x="1127" y="397" width="3" height="1" fill="#c80000"/>
<rect x="1127" y="418" width="3" height="1" fill="#c80000"/>
<rect x="1127" y="437" width="3" height="1" fill="#c80000"/>
<rect x="1129" y="32" width="1" height="1" fill="#b0b0b0"/>
<rect x="1129" y="34" width="1" height="1" fill="#b0b0b0"/>
<rect x="1129" y="37" width="1" height="1" fill="#b0b0b0"/>
<rect x="1129" y="59" width="1" height="1" fill="#b0b0b0"/>
<rect x="1129" y="78" width="1" height="1" fill="#b0b0b0"/>
<rect x="1129" y="97" width="1" height="1" fill="#b0b0b0"/>
<rect x="1129" y="116" width="1" height="1" fill="#b0b0b0"/>
<rect x="1129" y="135" width="1" height="1" fill="#b0b0b0"/>
<rect x="1129" y="150" width="1" height="1" fill="#b0b0b0"/>
<rect x="1129" y="156" width="1" height="1" fill="#b0b0b0"/>
<rect x="1129" y="169" width="1" height="1" fill="#b0b0b0"/>
<rect x="1129" y="179" width="1" height="1" fill="#b0b0b0"/>
<rect x="1129" y="192" width="1" height="1" fill="#b0b0b0"/>
<rect x="1129" y="198" width="1" height="1" fill="#b0b0b0"/>
<rect x="1129" y="211" width="1" height="1" fill="#b0b0b0"/>
<rect x="1129" y="218" width="1" height="1" fill="#b0b0b0"/>
<rect x="1129" y="230" width="1" height="1" fill="#b0b0b0"/>
<rect x="1129" y="242" width="1" height="1" fill="#b0b0b0"/>
<rect x="1129" y="248" width="1" height="1" fill="#b0b0b0"/>
<rect x="1129" y="255" width="1" height="1" fill="#b0b0b0"/>
<rect x="1129" y="266" width="1" height="1" fill="#b0b0b0"/>
<rect x="1129" y="274" width="1" height="1" fill="#b0b0b0"/>
<rect x="1129" y="285" width="1" height="1" fill="#b0b0b0"/>
<rect x="1129" y="313" width="1" height="1" fill="#b0b0b0"/>
<rect x="1129" y="319" width="1" height="1" fill="#b0b0b0"/>
<rect x="1129" y="344" width="1" height="1" fill="#b0b0b0"/>
<rect x="1129" y="350" width="1" height="1" fill="#b0b0b0"/>
<rect x="1129" y="369" width="1" height="1" fill="#b0b0b0"/>
<rect x="1129" y="422" width="1" height="1" fill="#b0b0b0"/>
<rect x="1129" y="427" width="1" height="1" fill="#b0b0b0"/>
<rect x="1129" y="431" width="1" height="1" fill="#b0b0b0"/>
<rect x="1129" y="451" width="1" height="1" fill="#b0b0b0"/>
<rect x="1129" y="462" width="1" height="1" fill="#b0b0b0"/>
<rect x="1129" y="478" width="1" height="1" fill="#b0b0b0"/>
<rect x="1129" y="496" width="1" height="1" fill="#b0b0b0"/>
<rect x="1129" y="508" width="1" height="1" fill="#b0b0b0"/>
<rect x="1129" y="514" width="1" height="1" fill="#b0b0b0"/>
<rect x="1129" y="533" width="1" height="1" fill="#b0b0b0"/>
<rect x="1129" y="551" width="1" height="1" fill="#b0b0b0"/>
<rect x="1129" y="569" width="1" height="1" fill="#b0b0b0"/>
<rect x="1129" y="587" width="1" height="1" fill="#b0b0b0"/>
<rect x="1076" y="350" width="5" height="1" fill="#c80000"/>
<rect x="1076" y="328" width="2" height="1" fill="#c80000"/>
<rect x="1076" y="305" width="5" height="1" fill="#c80000"/>
<rect x="1076" y="283" width="2" height="1" fill="#c80000"/>
<rect x="1076" y="260" width="5" height="1" fill="#c80000"/>
<rect x="1076" y="238" width="2" height="1" fill="#c80000"/>
<rect x="1076" y="216" width="5" height="1" fill="#c80000"/>
<rect x="1076" y="193" width="2" height="1" fill="#c80000"/>
<rect x="1076" y="171" width="5" height="1" fill="#c80000"/>
<rect x="1076" y="148" width="2" height="1" fill="#c80000"/>
<rect x="1076" y="126" width="5" height="1" fill="#c80000"/>
<rect x="1076" y="104" width="2" height="1" fill="#c80000"/>
<rect x="1076" y="81" width="5" height="1" fill="#c80000"/>
<rect x="1076" y="59" width="2" height="1" fill="#c80000"/>
<rect x="1076" y="36" width="5" height="1" fill="#c80000"/>
<text class="ax" x="1120.5" y="40.8" text-anchor="end">22.00</text>
<text class="ax" x="1120.5" y="85.8" text-anchor="end">20.00</text>
<text class="ax" x="1120.5" y="130.8" text-anchor="end">18.00</text>
<text class="ax" x="1120.5" y="175.8" text-anchor="end">16.00</text>
<text class="ax" x="1120.5" y="220.8" text-anchor="end">14.00</text>
<text class="ax" x="1120.5" y="264.8" text-anchor="end">12.00</text>
<text class="ax" x="1120.5" y="309.8" text-anchor="end">10.00</text>
<text class="ax" x="1120.5" y="354.8" text-anchor="end">8.00</text>
<rect x="1077" y="562" width="4" height="1" fill="#c80000"/>
<rect x="1077" y="545" width="1" height="1" fill="#c80000"/>
<rect x="1077" y="528" width="4" height="1" fill="#c80000"/>
<rect x="1077" y="512" width="1" height="1" fill="#c80000"/>
<rect x="1077" y="495" width="4" height="1" fill="#c80000"/>
<rect x="1077" y="478" width="1" height="1" fill="#c80000"/>
<rect x="1077" y="462" width="4" height="1" fill="#c80000"/>
<rect x="1077" y="445" width="1" height="1" fill="#c80000"/>
<rect x="1077" y="428" width="4" height="1" fill="#c80000"/>
<text class="ax" x="1120.5" y="432.8" text-anchor="end">6.00</text>
<text class="ax" x="1120.5" y="466.8" text-anchor="end">4.00</text>
<text class="ax" x="1120.5" y="499.8" text-anchor="end">2.00</text>
<text class="ax" x="1120.5" y="532.8" text-anchor="end">0.00</text>
<text class="ax" x="1120.5" y="566.8" text-anchor="end">-2.00</text>
<rect x="1076" y="355" width="50" height="15" fill="#00008b"/>
<rect x="1076" y="354" width="50" height="1" fill="#c80000"/>
<rect x="1076" y="370" width="50" height="1" fill="#c80000"/>
<text x="1077.5" y="366.3" font-size="12.5" fill="#d0d0d0" textLength="20.5" lengthAdjust="spacingAndGlyphs">7.11</text>
<rect x="5.5" y="3.5" width="12" height="10" rx="2" fill="none" stroke="#9a9a9a" stroke-width="1.2"/>
<rect x="11" y="5.5" width="4" height="6" fill="#b4b4b4"/>
<text class="tb" x="27.4" y="14" style="fill:#c0c0c0;letter-spacing:0" textLength="23.8" lengthAdjust="spacingAndGlyphs">分时</text>
<text class="tb" x="61.0" y="14" style="fill:#c0c0c0;letter-spacing:0" textLength="30.3" lengthAdjust="spacingAndGlyphs">1分钟</text>
<text class="tb" x="100.0" y="14" style="fill:#c0c0c0;letter-spacing:0" textLength="30.3" lengthAdjust="spacingAndGlyphs">5分钟</text>
<text class="tb" x="138.6" y="14" style="fill:#c0c0c0;letter-spacing:0" textLength="36.8" lengthAdjust="spacingAndGlyphs">15分钟</text>
<text class="tb" x="185.0" y="14" style="fill:#c0c0c0;letter-spacing:0" textLength="36.8" lengthAdjust="spacingAndGlyphs">30分钟</text>
<text class="tb" x="230.1" y="14" style="fill:#c0c0c0;letter-spacing:0" textLength="36.8" lengthAdjust="spacingAndGlyphs">60分钟</text>
<text class="tb" x="276.6" y="14" style="fill:#30ffff;letter-spacing:0" textLength="23.8" lengthAdjust="spacingAndGlyphs">日线</text>
<text class="tb" x="310.6" y="14" style="fill:#c0c0c0;letter-spacing:0" textLength="23.8" lengthAdjust="spacingAndGlyphs">周线</text>
<text class="tb" x="344.1" y="14" style="fill:#c0c0c0;letter-spacing:0" textLength="23.8" lengthAdjust="spacingAndGlyphs">月线</text>
<text class="tb" x="377.6" y="14" style="fill:#c0c0c0;letter-spacing:0" textLength="35.7" lengthAdjust="spacingAndGlyphs">多周期</text>
<text class="tb" x="421.6" y="14" style="fill:#c0c0c0;letter-spacing:0" textLength="23.8" lengthAdjust="spacingAndGlyphs">更多</text>
<polyline points="451,4.5 456,9 451,13.5" fill="none" stroke="#c0c0c0" stroke-width="1"/>
<text class="tb" x="827.0" y="14" text-anchor="middle">复权</text>
<text class="tb" x="862.0" y="14" text-anchor="middle">叠加</text>
<text class="tb" x="897.0" y="14" text-anchor="middle">多股</text>
<text class="tb" x="932.0" y="14" text-anchor="middle">统计</text>
<text class="tb" x="967.0" y="14" text-anchor="middle">画线</text>
<text class="tb" x="1002.0" y="14" text-anchor="middle">F10</text>
<text class="tb" x="1037.0" y="14" text-anchor="middle">标记</text>
<text class="tb" x="1072.0" y="14" text-anchor="middle">+自选</text>
<text class="tb" x="1108.0" y="14" text-anchor="middle">返回</text>
<text class="tb" x="2.5" y="34" style="letter-spacing:0" textLength="108" lengthAdjust="spacing">川金诺(日线.前复权)</text>
<circle cx="122" cy="29.5" r="5.8" fill="#8c8c8c"/>
<polyline points="118.8,28 122,31.2 125.2,28" fill="none" stroke="#000" stroke-width="1.3"/>
<polygon points="1047,24.5 1052,29.5 1047,34.5 1042,29.5" fill="none" stroke="#a0a0a0" stroke-width="1"/>
<rect x="1060.5" y="24.5" width="11" height="10" rx="2" fill="none" stroke="#a8a8a8" stroke-width="1.2"/>
<rect x="1066" y="26.5" width="4" height="6" fill="#c0c0c0"/>
<text x="1004.5" y="49.6" font-size="12" fill="#d0d0d0">21.83</text>
<polyline points="1037,44.5 1046,43 1050,41.5 1056,41" fill="none" stroke="#d0d0d0" stroke-width="1"/>
<polyline points="1051,38.8 1056.5,41 1052.5,44.5" fill="none" stroke="#d0d0d0" stroke-width="1"/>
<text x="210" y="372" font-size="12" fill="#d0d0d0">7.27</text>
<polyline points="198,366.5 208,366.5" fill="none" stroke="#d0d0d0" stroke-width="1"/>
<polyline points="201,363.5 198,366.5 201,369.5" fill="none" stroke="#d0d0d0" stroke-width="1"/>
<rect x="174" y="371" width="13" height="14" fill="#008080"/>
<text class="mk" x="180.5" y="382.6" text-anchor="middle">解</text>
<rect x="304" y="371" width="13" height="14" fill="#8b4513"/>
<text class="mk" x="310.5" y="382.6" text-anchor="middle">榜</text>
<rect x="665" y="371" width="13" height="14" fill="#8b0000"/>
<text class="mk" x="671.5" y="382.6" text-anchor="middle">涨</text>
<rect x="917" y="371" width="13" height="14" fill="#0a3264"/>
<text class="mk" x="923.5" y="382.6" text-anchor="middle">财</text>
<rect x="953" y="371" width="13" height="14" fill="#008000"/>
<text class="mk" x="959.5" y="382.6" text-anchor="middle">减</text>
<rect x="1052" y="371" width="13" height="14" fill="#c85a14"/>
<text class="mk" x="1058.5" y="382.6" text-anchor="middle">预</text>
<text x="412" y="383.3" font-size="9.5" font-weight="bold" fill="#ff0000" text-anchor="middle">$</text>
<polygon points="409.5,375 412,372.5 414.5,375" fill="#ff0000"/>
<text x="989" y="383.3" font-size="9.5" font-weight="bold" fill="#ff0000" text-anchor="middle">$</text>
<polygon points="986.5,375 989,372.5 991.5,375" fill="#ff0000"/>
<circle cx="8" cy="394" r="5.8" fill="#8c8c8c"/>
<polyline points="4.8,392.5 8,395.7 11.2,392.5" fill="none" stroke="#000" stroke-width="1.3"/>
<text x="18" y="398" font-size="12" fill="#c8c8c8">股朋指标网</text>
<text x="83.3" y="398" font-size="12" fill="#ffffff" textLength="36.5">A: 0.26</text>
<text x="125" y="398" font-size="12" fill="#ffff00" textLength="37">B: 0.29</text>
<text x="168" y="398" font-size="12" fill="#ff00ff" textLength="40.5">F: -2.63</text>
<text x="214" y="398" font-size="12" fill="#00e600" textLength="29.5">: 0.00</text>
<text class="ax" x="1.5" y="643">2023年</text>
<rect x="79" y="631" width="1" height="15" fill="#c80000"/>
<text class="ax" x="80.5" y="643">12</text>
<rect x="132" y="631" width="1" height="15" fill="#c80000"/>
<text class="ax" x="133.5" y="643">1</text>
<rect x="188" y="631" width="1" height="15" fill="#c80000"/>
<text class="ax" x="189.5" y="643">2</text>
<rect x="226" y="631" width="1" height="15" fill="#c80000"/>
<text class="ax" x="227.5" y="643">3</text>
<rect x="280" y="631" width="1" height="15" fill="#c80000"/>
<text class="ax" x="281.5" y="643">4</text>
<rect x="330" y="631" width="1" height="15" fill="#c80000"/>
<text class="ax" x="331.5" y="643">5</text>
<rect x="381" y="631" width="1" height="15" fill="#c80000"/>
<text class="ax" x="382.5" y="643">6</text>
<rect x="429" y="631" width="1" height="15" fill="#c80000"/>
<text class="ax" x="430.5" y="643">7</text>
<rect x="488" y="631" width="1" height="15" fill="#c80000"/>
<text class="ax" x="489.5" y="643">8</text>
<rect x="544" y="631" width="1" height="15" fill="#c80000"/>
<text class="ax" x="545.5" y="643">9</text>
<rect x="592" y="631" width="1" height="15" fill="#c80000"/>
<text class="ax" x="593.5" y="643">10</text>
<rect x="638" y="631" width="1" height="15" fill="#c80000"/>
<text class="ax" x="639.5" y="643">11</text>
<rect x="691" y="631" width="1" height="15" fill="#c80000"/>
<text class="ax" x="692.5" y="643">12</text>
<rect x="747" y="631" width="1" height="15" fill="#c80000"/>
<text class="ax" x="748.5" y="643">1</text>
<rect x="836" y="631" width="1" height="15" fill="#c80000"/>
<rect x="839" y="631" width="1" height="15" fill="#c80000"/>
<text class="ax" x="840.5" y="643">3</text>
<rect x="892" y="631" width="1" height="15" fill="#c80000"/>
<text class="ax" x="893.5" y="643">4</text>
<rect x="945" y="631" width="1" height="15" fill="#c80000"/>
<text class="ax" x="946.5" y="643">5</text>
<rect x="106" y="631" width="1" height="2" fill="#c80000"/>
<rect x="119" y="631" width="1" height="2" fill="#c80000"/>
<rect x="146" y="631" width="1" height="2" fill="#c80000"/>
<rect x="160" y="631" width="1" height="2" fill="#c80000"/>
<rect x="174" y="631" width="1" height="2" fill="#c80000"/>
<rect x="198" y="631" width="1" height="2" fill="#c80000"/>
<rect x="207" y="631" width="1" height="2" fill="#c80000"/>
<rect x="217" y="631" width="1" height="2" fill="#c80000"/>
<rect x="240" y="631" width="1" height="2" fill="#c80000"/>
<rect x="253" y="631" width="1" height="2" fill="#c80000"/>
<rect x="267" y="631" width="1" height="2" fill="#c80000"/>
<rect x="293" y="631" width="1" height="2" fill="#c80000"/>
<rect x="305" y="631" width="1" height="2" fill="#c80000"/>
<rect x="318" y="631" width="1" height="2" fill="#c80000"/>
<rect x="343" y="631" width="1" height="2" fill="#c80000"/>
<rect x="356" y="631" width="1" height="2" fill="#c80000"/>
<rect x="368" y="631" width="1" height="2" fill="#c80000"/>
<rect x="393" y="631" width="1" height="2" fill="#c80000"/>
<rect x="405" y="631" width="1" height="2" fill="#c80000"/>
<rect x="418" y="631" width="1" height="2" fill="#c80000"/>
<rect x="444" y="631" width="1" height="2" fill="#c80000"/>
<rect x="459" y="631" width="1" height="2" fill="#c80000"/>
<rect x="473" y="631" width="1" height="2" fill="#c80000"/>
<rect x="502" y="631" width="1" height="2" fill="#c80000"/>
<rect x="516" y="631" width="1" height="2" fill="#c80000"/>
<rect x="530" y="631" width="1" height="2" fill="#c80000"/>
<rect x="556" y="631" width="1" height="2" fill="#c80000"/>
<rect x="568" y="631" width="1" height="2" fill="#c80000"/>
<rect x="580" y="631" width="1" height="2" fill="#c80000"/>
<rect x="615" y="631" width="1" height="2" fill="#c80000"/>
<rect x="627" y="631" width="1" height="2" fill="#c80000"/>
<rect x="653" y="631" width="1" height="2" fill="#c80000"/>
<rect x="665" y="631" width="1" height="2" fill="#c80000"/>
<rect x="678" y="631" width="1" height="2" fill="#c80000"/>
<rect x="706" y="631" width="1" height="2" fill="#c80000"/>
<rect x="719" y="631" width="1" height="2" fill="#c80000"/>
<rect x="733" y="631" width="1" height="2" fill="#c80000"/>
<rect x="852" y="631" width="1" height="2" fill="#c80000"/>
<rect x="866" y="631" width="1" height="2" fill="#c80000"/>
<rect x="879" y="631" width="1" height="2" fill="#c80000"/>
<rect x="905" y="631" width="1" height="2" fill="#c80000"/>
<rect x="919" y="631" width="1" height="2" fill="#c80000"/>
<rect x="932" y="631" width="1" height="2" fill="#c80000"/>
<rect x="957" y="631" width="1" height="2" fill="#c80000"/>
<rect x="970" y="631" width="1" height="2" fill="#c80000"/>
<rect x="42" y="647" width="1" height="3" fill="#c80000"/>
<rect x="73" y="647" width="1" height="3" fill="#c80000"/>
<rect x="115" y="647" width="1" height="3" fill="#c80000"/>
<rect x="144" y="647" width="1" height="3" fill="#c80000"/>
<rect x="177" y="647" width="1" height="3" fill="#c80000"/>
<rect x="207" y="647" width="1" height="3" fill="#c80000"/>
<rect x="240" y="647" width="1" height="3" fill="#c80000"/>
<rect x="281" y="647" width="1" height="3" fill="#c80000"/>
<rect x="308" y="647" width="1" height="3" fill="#c80000"/>
<rect x="331" y="647" width="1" height="3" fill="#c80000"/>
<rect x="364" y="647" width="1" height="3" fill="#c80000"/>
<rect x="390" y="647" width="1" height="3" fill="#c80000"/>
<rect x="422" y="647" width="1" height="3" fill="#c80000"/>
<rect x="480" y="647" width="1" height="3" fill="#c80000"/>
<rect x="508" y="647" width="1" height="3" fill="#c80000"/>
<rect x="536" y="647" width="1" height="3" fill="#c80000"/>
<rect x="568" y="647" width="1" height="3" fill="#c80000"/>
<rect x="599" y="647" width="1" height="3" fill="#c80000"/>
<rect x="637" y="647" width="1" height="3" fill="#c80000"/>
<rect x="663" y="647" width="1" height="3" fill="#c80000"/>
<rect x="696" y="647" width="1" height="3" fill="#c80000"/>
<rect x="735" y="647" width="1" height="3" fill="#c80000"/>
<rect x="766" y="647" width="1" height="3" fill="#c80000"/>
<rect x="807" y="647" width="1" height="3" fill="#c80000"/>
<rect x="839" y="647" width="1" height="3" fill="#c80000"/>
<rect x="871" y="647" width="1" height="3" fill="#c80000"/>
<rect x="0" y="647" width="1" height="3" fill="#c80000"/>
<rect x="845" y="648" width="21" height="2" fill="#30d8d8" opacity="0.7"/>
<rect x="829" y="648" width="1" height="2" fill="#c0c0c0"/>
<rect x="8" y="649" width="1" height="1" fill="#c0c0c0"/>
<rect x="11" y="649" width="1" height="1" fill="#c0c0c0"/>
<rect x="51" y="649" width="1" height="1" fill="#c0c0c0"/>
<rect x="758" y="631" width="77" height="15" fill="#00008b"/>
<text x="759" y="643" font-size="12" fill="#d8d8d8" textLength="75" lengthAdjust="spacingAndGlyphs">2025/01/08/三</text>
<rect x="978" y="600" width="152" height="50" fill="#000"/>
<text class="wm" x="999" y="626.5" font-size="20.5" textLength="102" lengthAdjust="spacing">乐淘公式网</text>
<text class="wm" x="1001.5" y="644" font-size="15" textLength="89.5" lengthAdjust="spacingAndGlyphs">www.60lt.com</text>
</svg>
</body></html>
